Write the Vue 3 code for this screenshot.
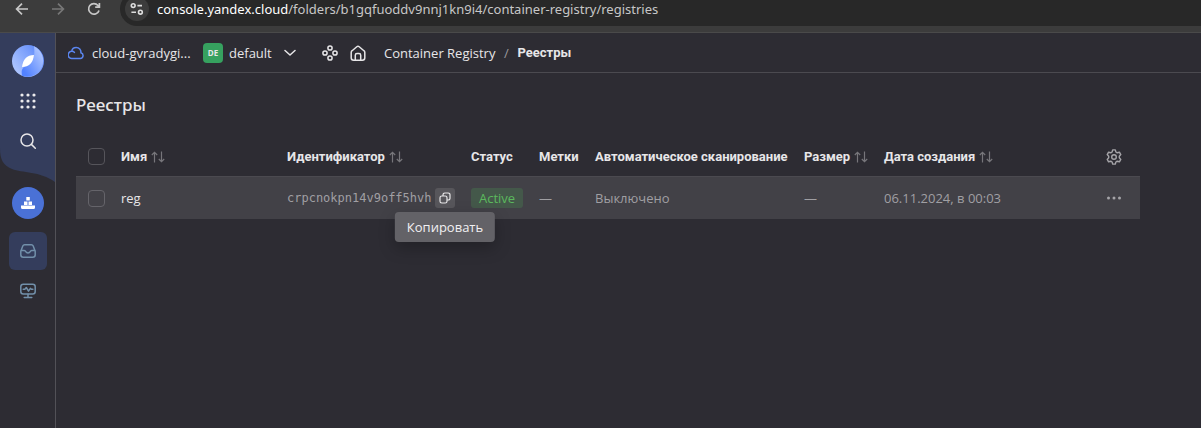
<script setup>
import { ref } from 'vue'

const columns = [
  { key: 'name', title: 'Имя', sortable: true },
  { key: 'id', title: 'Идентификатор', sortable: true },
  { key: 'status', title: 'Статус' },
  { key: 'tags', title: 'Метки' },
  { key: 'scan', title: 'Автоматическое сканирование' },
  { key: 'size', title: 'Размер', sortable: true },
  { key: 'date', title: 'Дата создания', sortable: true },
]

const rows = ref([
  {
    name: 'reg',
    id: 'crpcnokpn14v9off5hvh',
    status: 'Active',
    tags: '—',
    scan: 'Выключено',
    size: '—',
    date: '06.11.2024, в 00:03',
    checked: false,
  },
])
const allChecked = ref(false)
const dots = [2, 8, 14]
</script>

<template>
  <div class="window">
    <header class="browser">
      <button class="nav-button" aria-label="Back">
        <svg width="16" height="16" viewBox="0 0 16 16"><path d="M14 8H2.8M8 2.6 2.6 8 8 13.4" /></svg>
      </button>
      <button class="nav-button dim" aria-label="Forward">
        <svg width="16" height="16" viewBox="0 0 16 16"><path d="M2 8h11.2M8 2.6 13.4 8 8 13.4" /></svg>
      </button>
      <button class="nav-button" aria-label="Reload">
        <svg width="16" height="16" viewBox="0 0 16 16"><path d="M13 9.4A5.3 5.3 0 1 1 12 4.5l1.4 1.4M13.4 2v4.2H9.2" /></svg>
      </button>
      <div class="address">
        <button class="site-info" aria-label="Site information">
          <svg width="14" height="14" viewBox="0 0 14 14">
            <circle cx="3.2" cy="3.6" r="1.9" /><path d="M7.4 3.6H12M1.4 10.2H6" /><circle cx="10.4" cy="10.2" r="1.9" />
          </svg>
        </button>
        <span class="url"><b>console.yandex.cloud</b>/folders/b1gqfuoddv9nnj1kn9i4/container-registry/registries</span>
      </div>
    </header>

    <div class="console">
      <aside class="sidebar">
        <svg class="wave" width="55" height="151" viewBox="0 0 55 151">
          <path d="M0 0H55V149C40 138 22 140 12 136C3 132 0 127 0 115Z" />
        </svg>
        <nav class="side-nav">
          <a href="#" class="logo" aria-label="Yandex Cloud">
            <svg width="32" height="32" viewBox="0 0 32 32">
              <defs>
                <linearGradient id="logoTop" x1="0.1" y1="0.7" x2="0.9" y2="0.1">
                  <stop offset="0" stop-color="#a9c2ff" /><stop offset="1" stop-color="#5b87f9" />
                </linearGradient>
                <linearGradient id="logoBottom" x1="0.1" y1="0.8" x2="0.9" y2="0.1">
                  <stop offset="0" stop-color="#5282ff" /><stop offset="1" stop-color="#b3c9ff" />
                </linearGradient>
              </defs>
              <circle cx="16" cy="16" r="16" fill="url(#logoTop)" />
              <path d="M22 1.2A16 16 0 0 1 10 30.8C9 25 10 22 16 20C22 16 23 10 22 1.2Z" fill="url(#logoBottom)" />
              <path d="M22 10C15 10 11 14 10 22C17 22 21 18 22 10Z" fill="#fff" />
            </svg>
          </a>
          <button class="side-item" aria-label="All services">
            <svg width="16" height="16" viewBox="0 0 16 16" fill="#ecebed">
              <template v-for="y in dots" :key="y">
                <circle v-for="x in dots" :key="x" :cx="x" :cy="y" r="1.6" />
              </template>
            </svg>
          </button>
          <button class="side-item" aria-label="Search">
            <svg class="line" width="16" height="16" viewBox="0 0 16 16"><circle cx="7" cy="7" r="6" /><path d="m11.4 11.4 3.9 3.9" /></svg>
          </button>
        </nav>
        <nav class="service-nav">
          <a href="#" class="service" aria-label="Container Registry">
            <svg width="16" height="14" viewBox="0 0 16 14" fill="#fff">
              <path d="M6.3 1h3.5v3.5H6.3zM4 5.5h3.5V9H4zM8.5 5.5H12V9H8.5zM1 9.5h14V11.500a1.500 1.500 0 0 1-1.500 1.500h-11A1.500 1.500 0 0 1 1 11.500z" />
            </svg>
          </a>
          <a href="#" class="section active" aria-label="Реестры">
            <svg width="16" height="16" viewBox="0 0 16 16">
              <path d="M4.600 1.800h6.800a2 2 0 0 1 1.800 1.200l1.700 4.400c.2.400.3.900.3 1.300v3a2.500 2.500 0 0 1-2.500 2.500H3.300a2.500 2.500 0 0 1-2.500-2.500v-3c0-.4.100-.9.300-1.300L2.800 3a2 2 0 0 1 1.800-1.200ZM1.200 7.600h3.100c.7 0 1.200.5 1.500 1.100.4.700 1.200 1.200 2.200 1.200s1.800-.5 2.200-1.200c.3-.6.800-1.100 1.500-1.100h3.100" />
            </svg>
          </a>
          <a href="#" class="section" aria-label="Мониторинг">
            <svg width="16" height="16" viewBox="0 0 16 16">
              <rect x="0.800" y="1.300" width="14.400" height="9.800" rx="2.500" />
              <path d="M3.200 6.200h1.600l1.500-1.700 2.200 3.600 1.900-2.800 1 1h1.500M8 11.200v2.700M4.200 14.500h7.600" />
            </svg>
          </a>
        </nav>
      </aside>

      <div class="content">
        <div class="topbar">
          <a href="#" class="cloud">
            <svg width="16" height="14" viewBox="0 0 16 14">
              <path d="M3.800 12.500h8.500a2.900 2.900 0 0 0 .6-5.700A4.700 4.700 0 0 0 8.200 1.500 4.600 4.600 0 0 0 3.700 5.300a3.600 3.600 0 0 0 .1 7.200ZM3.700 5.300c1.200-.1 2.100.3 2.700 1.100" />
            </svg>
            cloud-gvradygi...
          </a>
          <button class="folder">
            <span class="folder-mark">DE</span>
            default
            <svg class="line" width="12" height="8" viewBox="0 0 12 8"><path d="m1 1.500 5 4.500 5-4.500" /></svg>
          </button>
          <div class="shortcuts">
            <a href="#" aria-label="Ресурсы">
              <svg class="line" width="16" height="16" viewBox="0 0 16 16">
                <circle cx="8" cy="3" r="2.100" /><circle cx="3" cy="8" r="2.100" /><circle cx="13" cy="8" r="2.100" /><circle cx="8" cy="13" r="2.100" />
              </svg>
            </a>
            <a href="#" aria-label="Главная">
              <svg class="line" width="16" height="16" viewBox="0 0 16 16">
                <path d="M1.200 7.400c0-.7.300-1.300.9-1.700l4.700-4c.7-.6 1.700-.6 2.400 0l4.700 4c.6.400.9 1 .9 1.700v5.300a2.500 2.500 0 0 1-2.500 2.500H3.700a2.500 2.500 0 0 1-2.500-2.500ZM5.300 15V10.200c0-1 .7-1.700 1.700-1.700h2c1 0 1.700.7 1.700 1.700V15" />
              </svg>
            </a>
          </div>
          <nav class="crumbs">
            <a href="#">Container Registry</a>
            <span class="slash">/</span>
            <strong>Реестры</strong>
          </nav>
        </div>

        <main>
          <h1>Реестры</h1>
          <table>
            <colgroup>
              <col class="c-check" />
              <col v-for="c in columns" :key="c.key" :class="'c-' + c.key" />
              <col class="c-actions" />
            </colgroup>
            <thead>
              <tr>
                <th class="check"><input v-model="allChecked" type="checkbox" aria-label="Выбрать все" /></th>
                <th v-for="c in columns" :key="c.key">
                  <span class="head">
                    {{ c.title }}
                    <svg v-if="c.sortable" class="sort" width="14" height="12" viewBox="0 0 14 12">
                      <path d="M3.500 11.500v-10M.8 4l2.700-2.700L6.200 4M10.500.5v10M7.800 8l2.700 2.700L13.200 8" />
                    </svg>
                  </span>
                </th>
                <th class="actions">
                  <button aria-label="Настройки">
                    <svg class="gear" width="16" height="16" viewBox="0 0 16 16">
                      <path d="M6.700.9h2.600l.6 2.100 1.300.8 2.200-.6 1.400 2.400L13.300 7.200v1.600l1.500 1.600-1.400 2.400-2.200-.6-1.300.8-.6 2.100H6.700L6.100 13l-1.300-.8-2.200.6-1.400-2.400 1.500-1.600V7.200L1.200 5.600l1.400-2.400 2.200.6L6.100 3Z" />
                      <circle cx="8" cy="8" r="2.300" />
                    </svg>
                  </button>
                </th>
              </tr>
            </thead>
            <tbody>
              <tr v-for="r in rows" :key="r.id">
                <td class="check"><input v-model="r.checked" type="checkbox" :aria-label="'Выбрать ' + r.name" /></td>
                <td class="name">{{ r.name }}</td>
                <td>
                  <div class="ident">
                    <code>{{ r.id }}</code>
                    <div class="copy">
                      <button aria-label="Копировать" aria-describedby="copy-tip">
                        <svg width="12" height="12" viewBox="0 0 12 12">
                          <rect x="1" y="4" width="7" height="7" rx="1.800" />
                          <path d="M4 4V2.800A1.800 1.800 0 0 1 5.800 1H9.200A1.800 1.800 0 0 1 11 2.800V6.200A1.800 1.800 0 0 1 9.200 8H8" />
                        </svg>
                      </button>
                      <div id="copy-tip" class="tooltip" role="tooltip">Копировать</div>
                    </div>
                  </div>
                </td>
                <td><span class="badge">{{ r.status }}</span></td>
                <td>{{ r.tags }}</td>
                <td>{{ r.scan }}</td>
                <td>{{ r.size }}</td>
                <td>{{ r.date }}</td>
                <td class="actions">
                  <button aria-label="Действия">
                    <svg width="16" height="16" viewBox="0 0 16 16" fill="#a5a4a8">
                      <circle cx="2.500" cy="8" r="1.500" /><circle cx="8" cy="8" r="1.500" /><circle cx="13.500" cy="8" r="1.500" />
                    </svg>
                  </button>
                </td>
              </tr>
            </tbody>
          </table>
        </main>
      </div>
    </div>
  </div>
</template>

<style>
body {
  background: #2d2c33;
}
</style>

<style scoped>
* {
  box-sizing: border-box;
}
.window {
  display: flex;
  flex-direction: column;
  min-height: 100vh;
  font: 13px/18px "Open Sans", "Noto Sans", sans-serif;
  color: #e7e6e8;
}
button {
  display: inline-flex;
  align-items: center;
  justify-content: center;
  padding: 0;
  border: 0;
  background: none;
  color: inherit;
  font: inherit;
}
a {
  color: inherit;
  text-decoration: none;
}
svg {
  display: block;
  flex: none;
}
.line {
  fill: none;
  stroke: #e7e6e8;
  stroke-width: 1.5;
  stroke-linecap: round;
  stroke-linejoin: round;
}

.browser {
  display: flex;
  align-items: flex-start;
  height: 33px;
  padding-left: 14px;
  background: #3c3c3c;
  border-bottom: 1px solid #4a4a4a;
}
.nav-button {
  width: 16px;
  height: 18px;
  margin-right: 20px;
}
.nav-button svg {
  fill: none;
  stroke: #c7c7c7;
  stroke-width: 1.7;
}
.nav-button.dim svg {
  stroke: #777;
}
.address {
  display: flex;
  flex: 1;
  align-items: center;
  height: 34px;
  margin-top: -8px;
  margin-left: -2px;
  padding-left: 5px;
  border-radius: 17px 0 0 17px;
  background: #282828;
}
.site-info {
  width: 24px;
  height: 24px;
  border-radius: 50%;
  background: #3c3c3c;
}
.site-info svg {
  fill: none;
  stroke: #dedede;
  stroke-width: 1.6;
}
.url {
  margin-left: 8px;
  font-family: "Noto Sans", sans-serif;
  line-height: 20px;
  white-space: nowrap;
  color: #c7c7c7;
}
.url b {
  font-weight: 400;
  color: #fff;
}

.console {
  display: flex;
  flex: 1;
}
.sidebar {
  position: relative;
  width: 56px;
  border-right: 1px solid #525157;
}
.wave {
  position: absolute;
  top: 0;
  left: 0;
  fill: #343d5c;
}
.side-nav,
.service-nav {
  position: relative;
  display: flex;
  flex-direction: column;
  align-items: center;
}
.side-nav {
  padding-top: 12px;
}
.side-item {
  width: 40px;
  height: 40px;
}
.logo {
  margin-bottom: 4px;
}
.service-nav {
  padding-top: 26px;
}
.service {
  display: grid;
  place-items: center;
  width: 32px;
  height: 32px;
  margin-bottom: 13px;
  border-radius: 50%;
  background: #4a71d6;
}
.section {
  display: grid;
  place-items: center;
  width: 38px;
  height: 38px;
  margin-bottom: 2px;
  border-radius: 6px;
}
.section.active {
  background: #343d5c;
}
.section svg {
  fill: none;
  stroke: #7290aa;
  stroke-width: 1.5;
  stroke-linecap: round;
  stroke-linejoin: round;
}

.content {
  flex: 1;
  min-width: 0;
}
.topbar {
  display: flex;
  align-items: center;
  height: 40px;
  padding-left: 12px;
  border-bottom: 1px solid #4b4a50;
  white-space: nowrap;
}
.cloud {
  display: flex;
  align-items: center;
  gap: 8px;
  width: 135px;
}
.cloud svg {
  fill: none;
  stroke: #5b86f0;
  stroke-width: 1.5;
  stroke-linecap: round;
}
.folder {
  justify-content: flex-start;
  gap: 6px;
  width: 119px;
}
.folder svg {
  margin-left: 6px;
}
.folder-mark {
  width: 20px;
  border-radius: 4px;
  background: #36a15f;
  font-size: 8px;
  line-height: 20px;
  font-weight: 700;
  text-align: center;
}
.shortcuts {
  display: flex;
  gap: 12px;
  width: 62px;
}
.crumbs {
  display: flex;
}
.slash {
  width: 22px;
  text-align: center;
  color: #9a999d;
}
.crumbs strong {
  font-family: Roboto, sans-serif;
  font-weight: 700;
}

main {
  padding: 20px 61px 0 20px;
}
h1 {
  margin: 0 0 20px;
  font-family: "Noto Sans", sans-serif;
  font-size: 17px;
  line-height: 24px;
  font-weight: 500;
}
table {
  width: 100%;
  table-layout: fixed;
  border-collapse: separate;
  border-spacing: 0;
}
.c-check {
  width: 37px;
}
.c-name {
  width: 166px;
}
.c-id {
  width: 184px;
}
.c-status {
  width: 68px;
}
.c-tags {
  width: 56px;
}
.c-scan {
  width: 209px;
}
.c-size {
  width: 80px;
}
.c-actions {
  width: 52px;
}
th,
td {
  padding: 0 8px;
  text-align: left;
  white-space: nowrap;
}
th {
  height: 40px;
  border-bottom: 1px solid #4b4a50;
  font-family: Roboto, sans-serif;
  font-weight: 700;
}
td {
  height: 42px;
  background: #424147;
  color: #a09fa3;
}
td.name {
  color: #e7e6e8;
}
.check {
  padding: 0 0 0 12px;
}
input {
  display: block;
  appearance: none;
  width: 17px;
  height: 17px;
  margin: 0;
  border: 1px solid #56555b;
  border-radius: 4px;
}
td input {
  border-color: #65646a;
}
.head {
  display: flex;
  align-items: center;
  gap: 4px;
}
.sort {
  fill: none;
  stroke: #77767b;
  stroke-width: 1.2;
}
.gear {
  fill: none;
  stroke: #a5a4a8;
  stroke-width: 1.4;
  stroke-linejoin: round;
}
.actions {
  padding: 0;
}
.actions button {
  display: flex;
  width: 100%;
}
.ident {
  display: flex;
  align-items: center;
  justify-content: space-between;
}
code {
  font: 12px/18px "DejaVu Sans Mono", monospace;
}
.copy {
  position: relative;
}
.copy button {
  display: flex;
  width: 20px;
  height: 20px;
  border-radius: 3px;
  background: #57565b;
}
.copy svg {
  fill: none;
  stroke: #e7e6e8;
  stroke-width: 1.2;
}
.tooltip {
  position: absolute;
  z-index: 1;
  top: 24px;
  left: 50%;
  padding: 6px 12px;
  border-radius: 4px;
  background: #636267;
  box-shadow: 0 6px 16px rgba(0, 0, 0, 0.25);
  color: #f1f0f2;
  transform: translateX(-50%);
}
.badge {
  display: inline-block;
  padding: 0 8px;
  border-radius: 3px;
  background: #44584a;
  line-height: 20px;
  color: #5bb85d;
}
</style>
